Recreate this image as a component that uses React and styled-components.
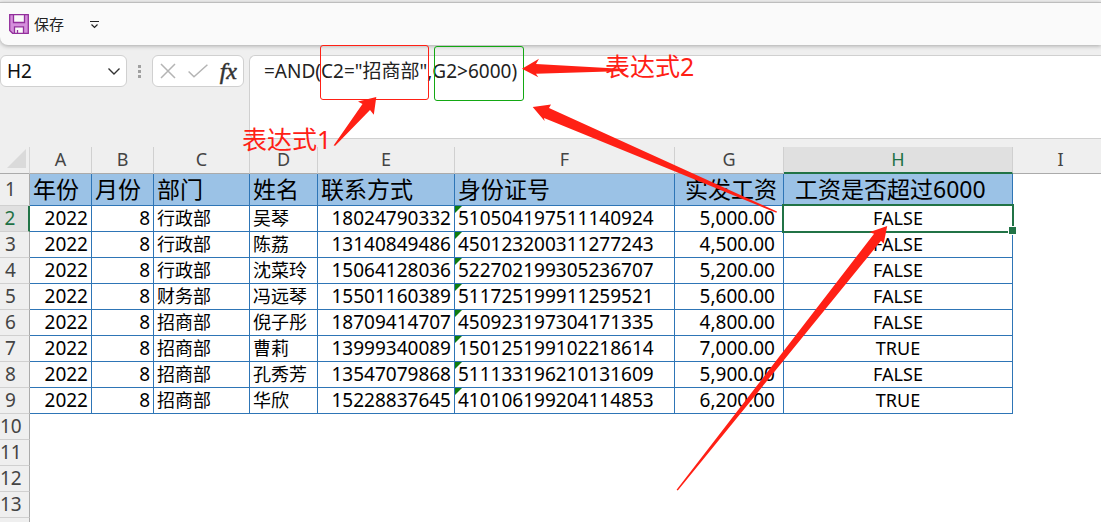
import React from 'react';
import styled, { createGlobalStyle } from 'styled-components';

const columns = [
  { id: 'A', title: '年份', width: 62, align: 'right', numeric: true },
  { id: 'B', title: '月份', width: 62, align: 'right', numeric: true },
  { id: 'C', title: '部门', width: 96, align: 'left' },
  { id: 'D', title: '姓名', width: 68, align: 'left' },
  { id: 'E', title: '联系方式', width: 137, align: 'right', numeric: true },
  { id: 'F', title: '身份证号', width: 220, align: 'left', numeric: true, flagged: true },
  { id: 'G', title: '实发工资', width: 109, align: 'right', numeric: true, headAlign: 'right', pad: 8 },
  { id: 'H', title: '工资是否超过6000', width: 229, align: 'center', headPad: 11 },
];

const rows = [
  ['2022', '8', '行政部', '吴琴', '18024790332', '510504197511140924', '5,000.00', 'FALSE'],
  ['2022', '8', '行政部', '陈荔', '13140849486', '450123200311277243', '4,500.00', 'FALSE'],
  ['2022', '8', '行政部', '沈菜玲', '15064128036', '522702199305236707', '5,200.00', 'FALSE'],
  ['2022', '8', '财务部', '冯远琴', '15501160389', '511725199911259521', '5,600.00', 'FALSE'],
  ['2022', '8', '招商部', '倪子彤', '18709414707', '450923197304171335', '4,800.00', 'FALSE'],
  ['2022', '8', '招商部', '曹莉', '13999340089', '150125199102218614', '7,000.00', 'TRUE'],
  ['2022', '8', '招商部', '孔秀芳', '13547079868', '511133196210131609', '5,900.00', 'FALSE'],
  ['2022', '8', '招商部', '华欣', '15228837645', '410106199204114853', '6,200.00', 'TRUE'],
];

const emptyRows = [10, 11, 12, 13];

function App() {
  return (
    <Page>
      <GlobalStyle />
      <QuickBar>
        <SaveButton type="button">
          <SaveIcon />
          保存
        </SaveButton>
        <MoreButton type="button" aria-label="自定义快速访问工具栏">
          <svg width="11" height="9" viewBox="0 0 11 9" fill="none" stroke="#222">
            <path d="M1 1.5h9M2.5 4.5l3 3 3-3" strokeWidth="1.2" />
          </svg>
        </MoreButton>
      </QuickBar>

      <FormulaBar>
        <NameBox>
          <NameInput aria-label="名称框" defaultValue="H2" />
          <IconButton type="button" aria-label="展开名称框">
            <svg width="14" height="9" viewBox="0 0 14 9" fill="none" stroke="#333" strokeWidth="1.4">
              <path d="M1.5 1.5L7 7l5.5-5.5" />
            </svg>
          </IconButton>
        </NameBox>
        <Grip>
          <i />
          <i />
          <i />
        </Grip>
        <FormulaActions>
          <IconButton type="button" aria-label="取消">
            <svg width="16" height="16" viewBox="0 0 16 16" stroke="#b4b4b4" strokeWidth="1.5">
              <path d="M1 1l14 14M15 1L1 15" />
            </svg>
          </IconButton>
          <IconButton type="button" aria-label="输入">
            <svg width="20" height="14" viewBox="0 0 20 14" fill="none" stroke="#b4b4b4" strokeWidth="1.5">
              <path d="M.6 7.5L6 12.8 19.4 .8" />
            </svg>
          </IconButton>
          <FxButton type="button" aria-label="插入函数">
            <em>f</em>
            <em>x</em>
          </FxButton>
        </FormulaActions>
        <FormulaInput aria-label="编辑栏" spellCheck={false} defaultValue={'=AND(C2="招商部",G2>6000)'} />
      </FormulaBar>

      <Sheet>
        <colgroup>
          <col style={{ width: 30 }} />
          {columns.map((col) => (
            <col key={col.id} style={{ width: col.width }} />
          ))}
          <col />
        </colgroup>
        <thead>
          <tr>
            <Corner aria-label="全选">
              <svg width="20" height="20" viewBox="0 0 20 20">
                <path d="M19 0v19H0z" fill="#dadada" />
              </svg>
            </Corner>
            {columns.map((col) => (
              <ColumnHead key={col.id} scope="col" $active={col.id === 'H'}>
                {col.id}
              </ColumnHead>
            ))}
            <LastColumnHead scope="col">I</LastColumnHead>
          </tr>
        </thead>
        <tbody>
          <tr>
            <RowHead scope="row" $tall>
              1
            </RowHead>
            {columns.map((col) => (
              <TitleCell key={col.id} $align={col.headAlign} $pad={col.headPad}>
                {col.title}
              </TitleCell>
            ))}
            <EmptyCell />
          </tr>
          {rows.map((row, r) => (
            <tr key={row[4]}>
              <RowHead scope="row" $active={r === 0}>
                {r + 2}
              </RowHead>
              {columns.map((col, c) => (
                <Cell key={col.id} $align={col.align} $numeric={col.numeric} $pad={col.pad}>
                  {col.flagged && <ErrorFlag />}
                  {row[c]}
                  {r === 0 && col.id === 'H' && <Selection />}
                </Cell>
              ))}
              <EmptyCell />
            </tr>
          ))}
          {emptyRows.map((n) => (
            <tr key={n}>
              <RowHead scope="row">{n}</RowHead>
              <EmptyCell colSpan={columns.length + 1} />
            </tr>
          ))}
          <tr>
            <RowHead />
            <EmptyCell colSpan={columns.length + 1} />
          </tr>
        </tbody>
      </Sheet>

      <Frame $left={320} $top={45} $width={109} $color="#ff2015" />
      <Frame $left={434} $top={46} $width={90} $color="#13a813" />
      <Arrows width="900" height="500" viewBox="0 0 900 500" aria-hidden="true">
        <path d="M376.3 97L358 101.5l4.5 2.5L333.6 145.6l1.6.2L370 110l3.8 4.8z" />
        <path d="M522 68.7L539 58.7l-3 5.2L625 69v2L536 73.8l2.3 3.5z" />
        <path d="M532.7 107L551 104.4l-2 3.6L777 211.6l-.6 1.2L544 118l.6 3z" />
        <path d="M887.2 226L869.3 232.3l4.8 1.4L676.6 489.8l1.2.8L881 240.8l2.7 3z" />
      </Arrows>
      <Note $left={242} $top={121}>
        表达式1
      </Note>
      <Note $left={605} $top={48}>
        表达式2
      </Note>
    </Page>
  );
}

function SaveIcon() {
  return (
    <svg width="20" height="20" viewBox="0 0 20 20" stroke="#93309c" strokeWidth="1.3">
      <path d="M.7.7h18.6v18.6H3.6L.7 16.4z" fill="#d590dc" />
      <path d="M4.5.7h11v7.8h-11z" fill="#fafafa" />
      <path d="M5.5 19.3v-6.5h9v6.5z" fill="#fafafa" />
      <path d="M8.5 16v3.3" fill="none" />
    </svg>
  );
}

export default App;

const GlobalStyle = createGlobalStyle`
  * {
    box-sizing: border-box;
  }

  body {
    margin: 0;
    background: #ffffff;
    font-family: 'Noto Sans', 'Noto Sans CJK SC', sans-serif;
    overflow: hidden;
  }

  button, input, textarea {
    font-family: inherit;
    border: none;
    outline: none;
    padding: 0;
    margin: 0;
    background: none;
  }
`;

const Page = styled.div`
  position: relative;
  min-height: 100vh;
  overflow: hidden;
  background: linear-gradient(#efefef 147px, #ffffff 147px);
`;

const QuickBar = styled.div`
  display: flex;
  align-items: center;
  gap: 25px;
  height: 43px;
  margin-top: 2px;
  padding: 0 9px;
  background: #fafafa;
  border-top: 1px solid #bdbdbd;
  border-bottom-left-radius: 8px;
  box-shadow: 0 1px 4px rgba(0, 0, 0, 0.3);
`;

const SaveButton = styled.button`
  display: flex;
  align-items: center;
  gap: 5px;
  font-size: 15px;
  line-height: 20px;
  color: #222222;
`;

const MoreButton = styled.button`
  display: flex;
`;

const FormulaBar = styled.div`
  display: flex;
  align-items: flex-start;
  padding-top: 10px;
  height: 102px;
`;

const NameBox = styled.div`
  display: flex;
  align-items: center;
  width: 127px;
  height: 32px;
  padding: 0 5px 0 6px;
  background: #ffffff;
  border: 1px solid #d0d0d0;
  border-radius: 6px;
`;

const NameInput = styled.input`
  flex: 1;
  min-width: 0;
  font-size: 19px;
  color: #111111;
`;

const IconButton = styled.button`
  display: flex;
`;

const Grip = styled.div`
  display: flex;
  flex-direction: column;
  align-items: center;
  justify-content: center;
  gap: 2px;
  width: 25px;
  height: 32px;

  i {
    width: 3px;
    height: 3px;
    background: #a0a0a0;
  }
`;

const FormulaActions = styled.div`
  display: flex;
  align-items: center;
  justify-content: space-between;
  width: 92px;
  height: 32px;
  margin-right: 5px;
  padding: 0 6px 0 7px;
  background: #ffffff;
  border: 1px solid #d0d0d0;
  border-radius: 6px;
`;

const FxButton = styled.button`
  display: flex;
  align-items: baseline;
  line-height: 28px;
  color: #333333;

  em {
    font-family: 'Liberation Serif', serif;
    font-size: 24px;
    font-weight: normal;
    -webkit-text-stroke: 0.5px #333333;
  }
`;

const FormulaInput = styled.textarea`
  flex: 1;
  min-width: 0;
  height: 84px;
  padding: 2px 14px;
  resize: none;
  background: #ffffff;
  border: 1px solid #d0d0d0;
  border-right: none;
  border-top-left-radius: 6px;
  border-bottom-left-radius: 6px;
  font-size: 19px;
  line-height: 26px;
  color: #222222;
`;

const Sheet = styled.table`
  width: 100%;
  table-layout: fixed;
  border-collapse: separate;
  border-spacing: 0;
  background: #ffffff;

  th, td {
    padding: 0 0 2px;
    white-space: nowrap;
  }
`;

const Corner = styled.td`
  background: #efefef;
  border-right: 1px solid #d6d6d6;
  border-bottom: 1px solid #ababab;

  svg {
    display: block;
    margin-left: 7px;
  }
`;

const ColumnHead = styled.th`
  height: 27px;
  font-size: 18px;
  font-weight: normal;
  line-height: 22px;
  color: ${(props) => (props.$active ? '#1e7145' : '#444444')};
  background: ${(props) => (props.$active ? '#e0e0e0' : '#efefef')};
  border-right: 1px solid #d0d0d0;
  border-bottom: ${(props) => (props.$active ? '2px solid #217346' : '1px solid #ababab')};
`;

const LastColumnHead = styled(ColumnHead)`
  border-right: none;
  && {
    padding-left: 7px;
  }
`;

const RowHead = styled.th`
  height: ${(props) => (props.$tall ? 32 : 26)}px;
  && {
    padding-right: 8px;
  }
  font-size: 19px;
  font-weight: normal;
  line-height: 22px;
  color: ${(props) => (props.$active ? '#1e7145' : '#444444')};
  background: ${(props) => (props.$active ? '#e0e0e0' : '#efefef')};
  border-right: ${(props) => (props.$active ? '2px solid #217346' : '1px solid #ababab')};
  border-bottom: 1px solid #d0d0d0;
`;

const TitleCell = styled.td`
  && {
    padding: 0 6px 2px ${(props) => props.$pad || 3}px;
  }
  font-size: 23px;
  line-height: 28px;
  text-align: ${(props) => props.$align || 'left'};
  color: #000000;
  background: #9bc2e6;
  border-right: 1px solid #2e75b6;
  border-bottom: 1px solid #2e75b6;
`;

const Cell = styled.td`
  position: relative;
  && {
    padding: 0 ${(props) => props.$pad || 3}px 2px;
  }
  font-size: ${(props) => (props.$numeric ? 19 : 18)}px;
  line-height: 22px;
  text-align: ${(props) => props.$align};
  color: #000000;
  border-right: 1px solid #2e75b6;
  border-bottom: 1px solid #2e75b6;
`;

const EmptyCell = styled.td`
  background: #ffffff;
`;

const ErrorFlag = styled.span`
  position: absolute;
  top: 0;
  left: 0;
  border-top: 7px solid #107c10;
  border-right: 7px solid transparent;
`;

const Selection = styled.span`
  position: absolute;
  inset: -2px;
  border: 2px solid #217346;
  z-index: 1;

  &::after {
    content: '';
    position: absolute;
    right: -5px;
    bottom: -4px;
    width: 7px;
    height: 7px;
    background: #217346;
    border: 1px solid #ffffff;
  }
`;

/* annotations drawn over the sheet */
const Frame = styled.div`
  position: absolute;
  left: ${(props) => props.$left}px;
  top: ${(props) => props.$top}px;
  width: ${(props) => props.$width}px;
  height: 55px;
  border: 1px solid ${(props) => props.$color};
  border-radius: 3px;
  pointer-events: none;
`;

const Arrows = styled.svg`
  position: absolute;
  top: 0;
  left: 0;
  z-index: 2;
  fill: #ff2015;
  pointer-events: none;
`;

const Note = styled.span`
  position: absolute;
  left: ${(props) => props.$left}px;
  top: ${(props) => props.$top}px;
  z-index: 2;
  font-size: 25px;
  line-height: 36px;
  color: #ff2015;
  pointer-events: none;
`;
